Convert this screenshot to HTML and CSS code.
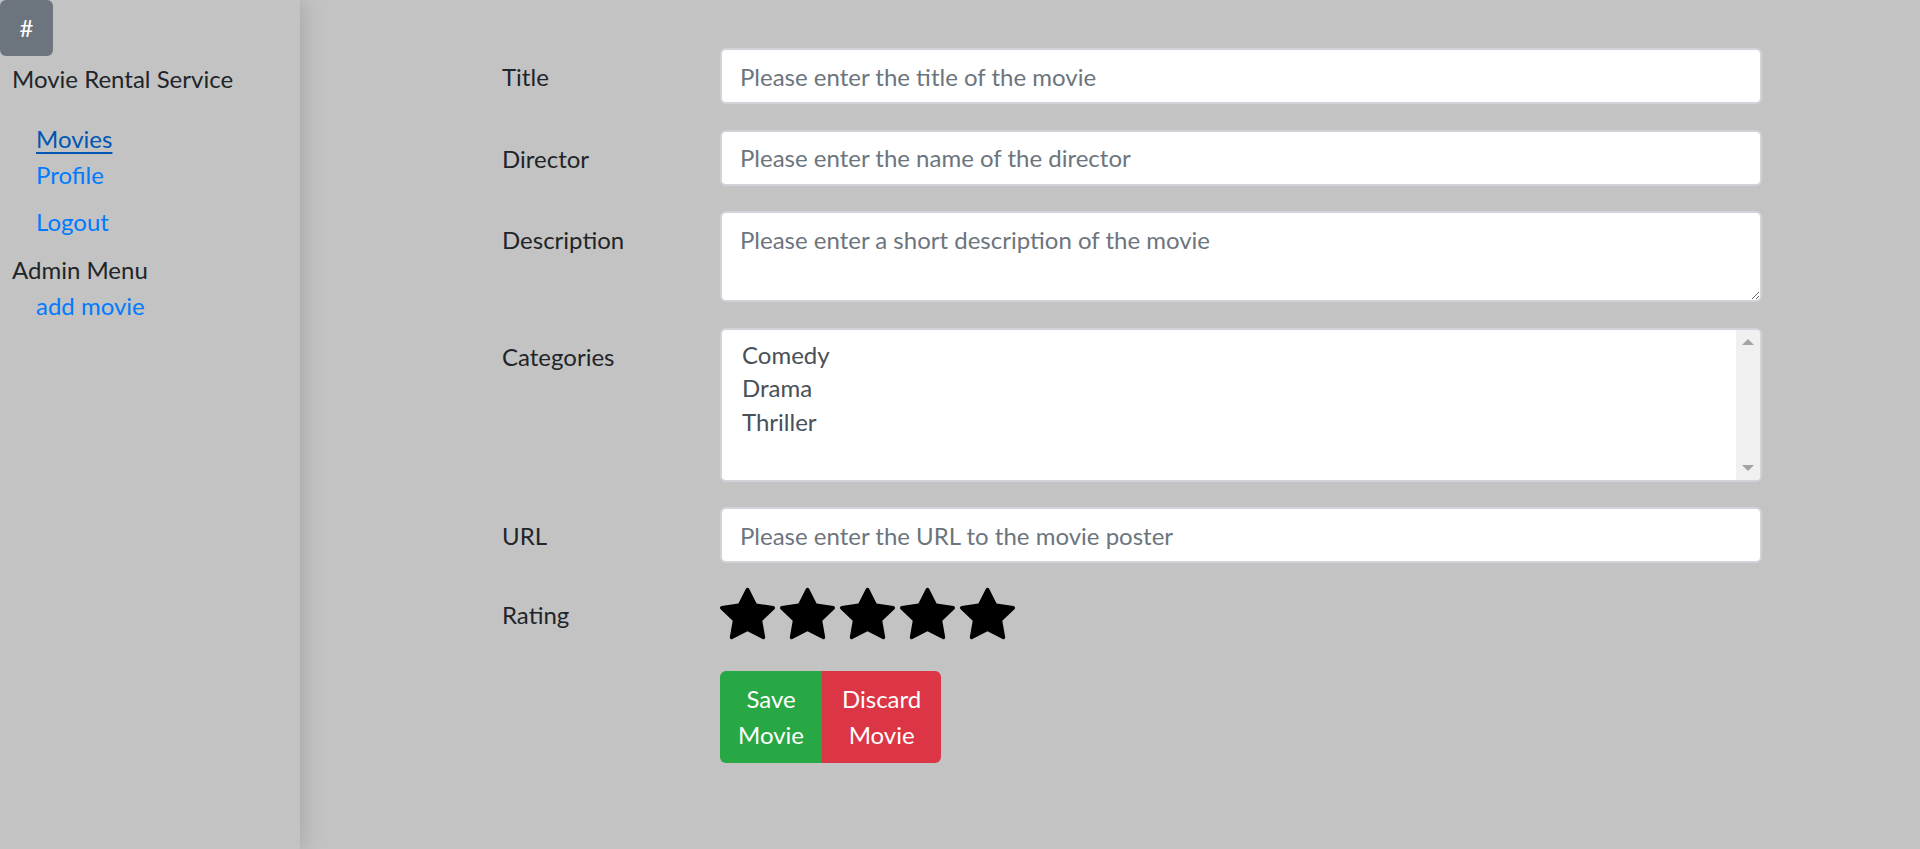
FILE: index.html
```html
<!DOCTYPE html>
<html lang="en">
<head>
<meta charset="utf-8">
<title>Movie Rental Service</title>
<link rel="stylesheet" href="styles.css">
</head>
<body>
<div class="app">
  <aside class="sidebar">
    <button class="toggle" type="button">#</button>
    <div class="brand">Movie Rental Service</div>
    <ul class="nav">
      <li><a class="nav-link active" href="#">Movies</a></li>
      <li><a class="nav-link" href="#">Profile</a></li>
      <li class="nav-sep"><a class="nav-link" href="#">Logout</a></li>
    </ul>
    <div class="admin-title">Admin Menu</div>
    <ul class="nav nav-admin">
      <li><a class="nav-link" href="#">add movie</a></li>
    </ul>
  </aside>
  <main class="main">
    <form class="movie-form">
      <div class="form-row">
        <label class="form-label">Title</label>
        <input class="form-control" type="text" placeholder="Please enter the title of the movie">
      </div>
      <div class="form-row">
        <label class="form-label">Director</label>
        <input class="form-control" type="text" placeholder="Please enter the name of the director">
      </div>
      <div class="form-row">
        <label class="form-label">Description</label>
        <textarea class="form-control textarea" placeholder="Please enter a short description of the movie"></textarea>
      </div>
      <div class="form-row">
        <label class="form-label">Categories</label>
        <div class="listbox" role="listbox" aria-multiselectable="true">
          <div class="listbox-options">
            <div class="option" role="option">Comedy</div>
            <div class="option" role="option">Drama</div>
            <div class="option" role="option">Thriller</div>
          </div>
          <div class="listbox-scroll">
            <span class="arrow arrow-up"></span>
            <span class="arrow arrow-down"></span>
          </div>
        </div>
      </div>
      <div class="form-row">
        <label class="form-label">URL</label>
        <input class="form-control" type="text" placeholder="Please enter the URL to the movie poster">
      </div>
      <div class="form-row row-rating">
        <label class="form-label">Rating</label>
        <div class="stars">
          <svg class="star" viewBox="0 0 16 16"><path d="M3.612 15.443c-.386.198-.824-.149-.746-.592l.83-4.73L.173 6.765c-.329-.314-.158-.888.283-.95l4.898-.696L7.538.792c.197-.39.73-.39.927 0l2.184 4.327 4.898.696c.441.062.612.636.282.95l-3.522 3.356.83 4.73c.078.443-.36.79-.746.592L8 13.187l-4.389 2.256z"/></svg>
          <svg class="star" viewBox="0 0 16 16"><path d="M3.612 15.443c-.386.198-.824-.149-.746-.592l.83-4.73L.173 6.765c-.329-.314-.158-.888.283-.95l4.898-.696L7.538.792c.197-.39.73-.39.927 0l2.184 4.327 4.898.696c.441.062.612.636.282.95l-3.522 3.356.83 4.73c.078.443-.36.79-.746.592L8 13.187l-4.389 2.256z"/></svg>
          <svg class="star" viewBox="0 0 16 16"><path d="M3.612 15.443c-.386.198-.824-.149-.746-.592l.83-4.73L.173 6.765c-.329-.314-.158-.888.283-.95l4.898-.696L7.538.792c.197-.39.73-.39.927 0l2.184 4.327 4.898.696c.441.062.612.636.282.95l-3.522 3.356.83 4.73c.078.443-.36.79-.746.592L8 13.187l-4.389 2.256z"/></svg>
          <svg class="star" viewBox="0 0 16 16"><path d="M3.612 15.443c-.386.198-.824-.149-.746-.592l.83-4.73L.173 6.765c-.329-.314-.158-.888.283-.95l4.898-.696L7.538.792c.197-.39.73-.39.927 0l2.184 4.327 4.898.696c.441.062.612.636.282.95l-3.522 3.356.83 4.73c.078.443-.36.79-.746.592L8 13.187l-4.389 2.256z"/></svg>
          <svg class="star" viewBox="0 0 16 16"><path d="M3.612 15.443c-.386.198-.824-.149-.746-.592l.83-4.73L.173 6.765c-.329-.314-.158-.888.283-.95l4.898-.696L7.538.792c.197-.39.73-.39.927 0l2.184 4.327 4.898.696c.441.062.612.636.282.95l-3.522 3.356.83 4.73c.078.443-.36.79-.746.592L8 13.187l-4.389 2.256z"/></svg>
        </div>
      </div>
      <div class="form-row row-actions">
        <span class="form-label"></span>
        <div class="btn-group">
          <button class="btn btn-save" type="button">Save Movie</button>
          <button class="btn btn-discard" type="button">Discard Movie</button>
        </div>
      </div>
    </form>
  </main>
</div>
</body>
</html>
```
FILE: styles.css
```css
html, body {
  margin: 0;
  padding: 0;
  height: 100%;
}
body {
  background: #c3c3c3;
  font-family: "Lato", "Liberation Sans", sans-serif;
  font-size: 24px;
  line-height: 36px;
  color: #212529;
}
.app {
  display: flex;
  min-height: 100vh;
}
.sidebar {
  width: 300px;
  flex: 0 0 300px;
  min-height: 100vh;
  background: #c3c3c3;
  box-shadow: 2px 0 22px rgba(0, 0, 0, 0.16);
  position: relative;
  z-index: 2;
}
.toggle {
  display: block;
  width: 53px;
  height: 56px;
  margin: 0;
  padding: 0;
  border: none;
  border-radius: 6px;
  background: #6c757d;
  color: #fff;
  font-family: inherit;
  font-size: 24px;
  line-height: 56px;
  text-align: center;
}
.brand {
  margin-top: 4.5px;
  padding-left: 12px;
}
.nav {
  list-style: none;
  margin: 24px 0 0;
  padding: 0 0 0 36px;
}
.nav-sep {
  margin-top: 11px;
}
.nav-link {
  color: #007bff;
  text-decoration: none;
}
.nav-link.active {
  color: #0056b3;
  text-decoration: underline;
  text-decoration-thickness: 2px;
  text-underline-offset: 4px;
}
.admin-title {
  margin-top: 12px;
  padding-left: 12px;
}
.nav-admin {
  margin-top: 0;
}
.main {
  flex: 1;
  min-width: 0;
  position: relative;
  z-index: 1;
}
.movie-form {
  padding: 48px 0 0 202px;
  width: 1260px;
}
.form-row {
  display: grid;
  grid-template-columns: 218px 1042px;
  align-items: start;
  margin-bottom: 25.5px;
}
.form-label {
  display: block;
  padding-top: 11px;
  line-height: 36px;
}
.form-control {
  box-sizing: border-box;
  width: 100%;
  height: 56px;
  margin: 0;
  padding: 9px 18px;
  border: 2px solid #d0d4d9;
  border-radius: 6px;
  background: #fff;
  font-family: inherit;
  font-size: 24px;
  line-height: 36px;
  color: #495057;
  outline: none;
}
.form-control::placeholder {
  color: #6c757d;
  opacity: 1;
}
.textarea {
  height: 91px;
  resize: vertical;
  display: block;
}
.listbox {
  box-sizing: border-box;
  height: 154px;
  border: 2px solid #d0d4d9;
  border-radius: 6px;
  background: #fff;
  display: flex;
  overflow: hidden;
}
.listbox-options {
  flex: 1;
  padding: 8px 0 0 20px;
}
.option {
  line-height: 33.5px;
  color: #495057;
}
.listbox-scroll {
  width: 24px;
  flex: 0 0 24px;
  background: #f0f0f0;
  position: relative;
}
.arrow {
  position: absolute;
  left: 6px;
  width: 0;
  height: 0;
  border-left: 6px solid transparent;
  border-right: 6px solid transparent;
}
.arrow-up {
  top: 9px;
  border-bottom: 6px solid #a3a3a3;
}
.arrow-down {
  bottom: 9px;
  border-top: 6px solid #a3a3a3;
}
.row-rating {
  margin-top: -2.5px;
}
.stars {
  display: flex;
  gap: 5px;
}
.star {
  display: block;
  width: 55px;
  height: 55px;
  fill: #000;
}
.row-actions {
  margin-top: 30px;
}
.row-actions .form-label {
  padding: 0;
}
.btn-group {
  display: flex;
}
.btn {
  width: min-content;
  margin: 0;
  padding: 10px 18px;
  border: none;
  font-family: inherit;
  font-size: 24px;
  line-height: 36px;
  color: #fff;
  text-align: center;
}
.btn-save {
  background: #28a745;
  border-radius: 6px 0 0 6px;
}
.btn-discard {
  padding-left: 20px;
  padding-right: 20px;
  background: #dc3545;
  border-radius: 0 6px 6px 0;
}
```
